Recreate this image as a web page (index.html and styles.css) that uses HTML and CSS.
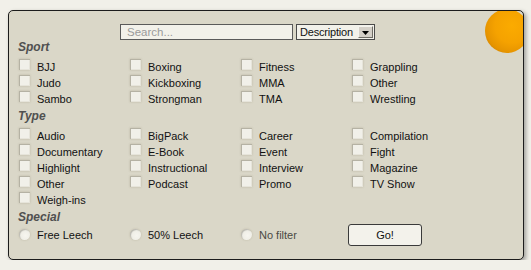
FILE: index.html
```html
<!DOCTYPE html>
<html>
<head>
<meta charset="utf-8">
<link rel="stylesheet" href="styles.css">
</head>
<body>
<form class="panel">
  <span class="orb"></span>
  <div class="toolbar">
    <input class="search" type="text" placeholder="Search...">
    <div class="select">
      <span class="select-text">Description</span>
      <span class="select-btn"><svg width="7" height="4" viewBox="0 0 7 4"><path d="M0 0H7L3.5 4Z" fill="#000"/></svg></span>
    </div>
  </div>

  <h3 class="group-title">Sport</h3>
  <div class="grid">
    <label class="opt"><span class="box"></span>BJJ</label>
    <label class="opt"><span class="box"></span>Boxing</label>
    <label class="opt"><span class="box"></span>Fitness</label>
    <label class="opt"><span class="box"></span>Grappling</label>
    <label class="opt"><span class="box"></span>Judo</label>
    <label class="opt"><span class="box"></span>Kickboxing</label>
    <label class="opt"><span class="box"></span>MMA</label>
    <label class="opt"><span class="box"></span>Other</label>
    <label class="opt"><span class="box"></span>Sambo</label>
    <label class="opt"><span class="box"></span>Strongman</label>
    <label class="opt"><span class="box"></span>TMA</label>
    <label class="opt"><span class="box"></span>Wrestling</label>
  </div>

  <h3 class="group-title">Type</h3>
  <div class="grid">
    <label class="opt"><span class="box"></span>Audio</label>
    <label class="opt"><span class="box"></span>BigPack</label>
    <label class="opt"><span class="box"></span>Career</label>
    <label class="opt"><span class="box"></span>Compilation</label>
    <label class="opt"><span class="box"></span>Documentary</label>
    <label class="opt"><span class="box"></span>E-Book</label>
    <label class="opt"><span class="box"></span>Event</label>
    <label class="opt"><span class="box"></span>Fight</label>
    <label class="opt"><span class="box"></span>Highlight</label>
    <label class="opt"><span class="box"></span>Instructional</label>
    <label class="opt"><span class="box"></span>Interview</label>
    <label class="opt"><span class="box"></span>Magazine</label>
    <label class="opt"><span class="box"></span>Other</label>
    <label class="opt"><span class="box"></span>Podcast</label>
    <label class="opt"><span class="box"></span>Promo</label>
    <label class="opt"><span class="box"></span>TV Show</label>
    <label class="opt"><span class="box"></span>Weigh-ins</label>
  </div>

  <h3 class="group-title group-title--tight">Special</h3>
  <div class="grid special">
    <label class="opt opt--radio"><span class="radio"></span>Free Leech</label>
    <label class="opt opt--radio"><span class="radio"></span>50% Leech</label>
    <label class="opt opt--radio opt--muted"><span class="radio"></span>No filter</label>
    <div class="go-cell"><button type="button" class="go">Go!</button></div>
  </div>
</form>
</body>
</html>
```

FILE: styles.css
```css
html, body {
  margin: 0;
  padding: 0;
  background: #f1f0e9;
}

body {
  font-family: "Liberation Sans", Arial, sans-serif;
  font-size: 11px;
  color: #111;
}

.panel {
  position: relative;
  overflow: hidden;
  box-sizing: border-box;
  display: block;
  margin: 10px 7px 0 8px;
  height: 250px;
  padding: 0 0 0 10px;
  background: #dad7c8;
  border: 1px solid #1c1c1c;
  border-radius: 5px;
  box-shadow: 2px 2px 4px rgba(0, 0, 0, 0.35);
}

.orb {
  position: absolute;
  left: 476px;
  top: -2px;
  width: 44px;
  height: 44px;
  border-radius: 50%;
  background: radial-gradient(circle at 62% 38%, #fbab00 0%, #f5a200 45%, #e69400 70%, #c27700 92%, #a86400 100%);
}

.toolbar {
  display: flex;
  align-items: flex-start;
  height: 16px;
  padding-top: 13px;
  margin-left: 101px;
  gap: 2px;
}

.search {
  box-sizing: border-box;
  width: 173px;
  height: 16px;
  margin: 0;
  padding: 0 6px;
  border: 1px solid #5a5a5a;
  background: #f2f1ea;
  font-family: "Liberation Sans", Arial, sans-serif;
  font-size: 11.5px;
  color: #111;
  outline: none;
}

.search::placeholder {
  color: #9a9a9a;
}

.select {
  box-sizing: border-box;
  display: flex;
  align-items: center;
  width: 79px;
  height: 16px;
  margin-left: 1px;
  border: 1px solid #4a4a4a;
  background: #f2f1ea;
}

.select-text {
  flex: 1;
  padding-left: 3px;
  font-size: 11px;
  line-height: 14px;
  color: #111;
  letter-spacing: -0.2px;
}

.select-btn {
  box-sizing: border-box;
  display: flex;
  align-items: center;
  justify-content: center;
  width: 15px;
  height: 12px;
  margin-right: 1px;
  background: #d4d0c8;
  border: 1px solid;
  border-color: #f4f3ee #6f6d66 #6f6d66 #f4f3ee;
}

.select-btn svg {
  display: block;
  margin-top: 1px;
}

.group-title {
  margin: 0 0 5px -1px;
  height: 14px;
  font-family: "Liberation Sans", Arial, sans-serif;
  font-size: 12px;
  line-height: 14px;
  font-weight: bold;
  font-style: italic;
  color: #505050;
}

.grid + .group-title {
  margin-top: 2px;
}

.group-title--tight {
  margin-bottom: 0;
}

.grid {
  display: grid;
  grid-template-columns: repeat(4, 111px);
  grid-auto-rows: 16px;
}

.opt {
  display: flex;
  align-items: flex-start;
  line-height: 16px;
  white-space: nowrap;
}

.box {
  box-sizing: border-box;
  flex: none;
  width: 11px;
  height: 11px;
  margin: 0 7px 0 0;
  background: #f1f0e9;
  box-shadow: inset 1px 1px 0 #b5b2a4, inset -1px -1px 0 #e6e4da, 0 0 2px rgba(120, 110, 80, 0.3);
}

.special {
  grid-auto-rows: 22px;
}

.opt--radio {
  line-height: 22px;
}

.radio {
  box-sizing: border-box;
  flex: none;
  width: 11px;
  height: 11px;
  margin: 5px 7px 0 0;
  border-radius: 50%;
  background: radial-gradient(circle at 60% 60%, #f6f5ef 0%, #efeee6 55%, #d6d3c6 100%);
  box-shadow: inset 1px 1px 1px rgba(0, 0, 0, 0.2), 0 0 2px rgba(120, 110, 80, 0.3);
}

.opt--muted {
  color: #4a4a44;
}

.go-cell {
  display: flex;
  align-items: flex-start;
}

.go {
  box-sizing: border-box;
  width: 74px;
  height: 22px;
  margin: 0 0 0 -4px;
  padding: 0;
  border: 1px solid #3a3a3a;
  border-radius: 3px;
  background: #f3f2eb;
  font-family: "Liberation Sans", Arial, sans-serif;
  font-size: 11px;
  color: #111;
  cursor: pointer;
}
```
